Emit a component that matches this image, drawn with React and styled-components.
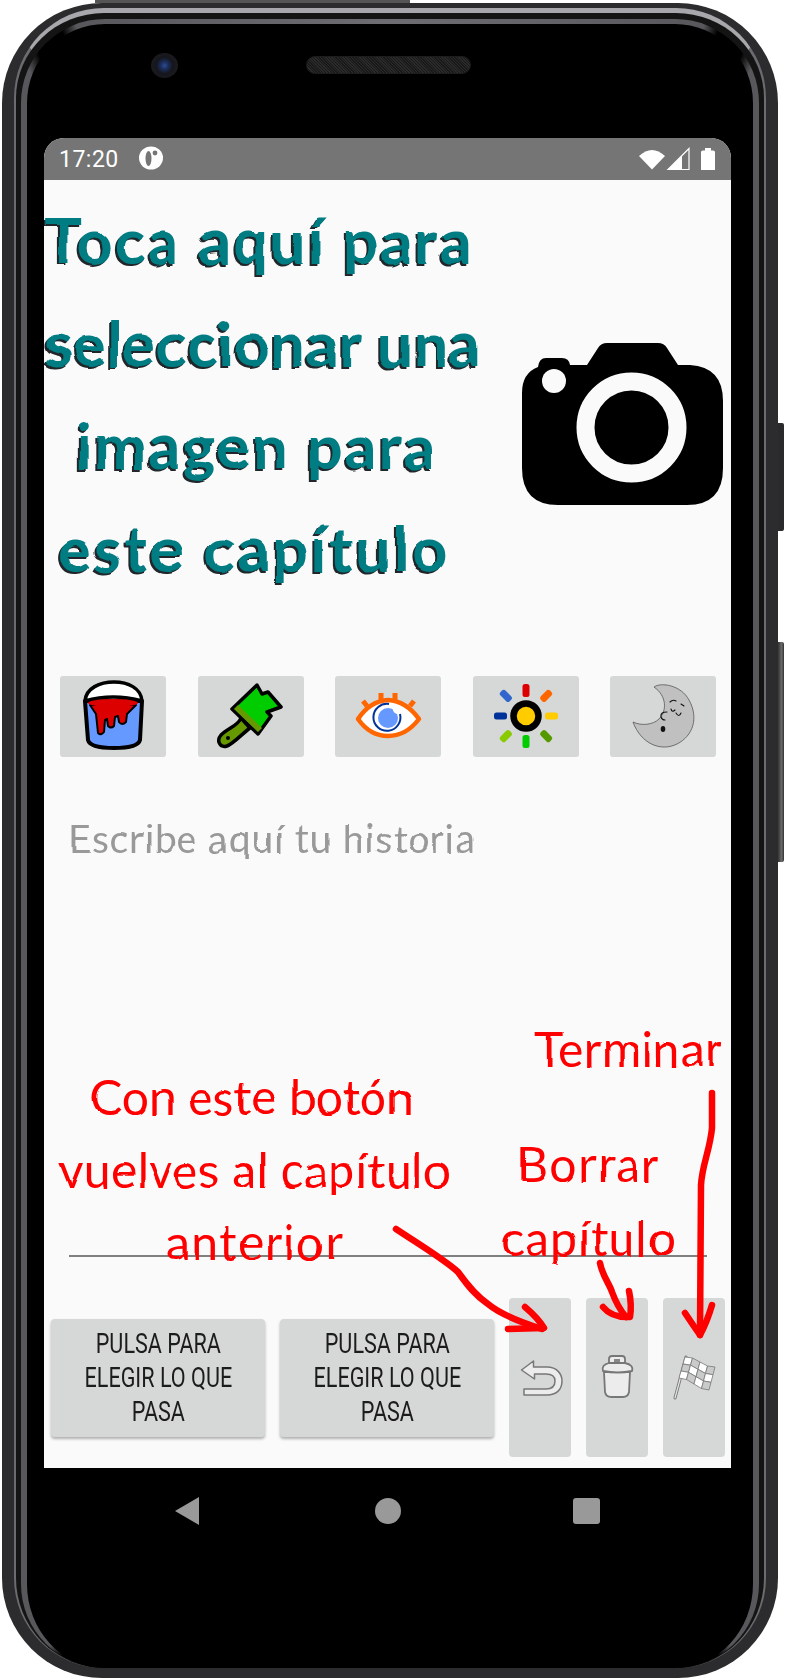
import styled, { createGlobalStyle } from 'styled-components';

const GREY_BTN = '#d6d7d7';

const Global = createGlobalStyle`
  html, body { margin: 0; padding: 0; background: #fff; }
  body { font-family: "Lato", "Noto Sans", sans-serif; }
`;

function App() {
  return (
    <Page>
      <Global />
      <HandFilter />
      <TopEdge />
      <VolumeKey />
      <PowerKey />
      <Phone>
        <Rim>
          <Bezel>
            <Earpiece>
              <FrontCamera />
              <Speaker />
            </Earpiece>
            <Screen>
              <StatusBar>
                <Clock>17:20</Clock>
                <NotifIcon />
                <StatusIcons />
              </StatusBar>
              <Hero>
                <Heading>
                  <HeadingLine $spacing={2}>Toca aquí para</HeadingLine>
                  <HeadingLine $spacing={0.4}>seleccionar una</HeadingLine>
                  <HeadingLine $spacing={1.9} $after={5}>imagen para</HeadingLine>
                  <HeadingLine $spacing={2.6} $after={10}>este capítulo</HeadingLine>
                </Heading>
                <CameraIcon />
              </Hero>
              <Tools>
                <ToolButton><BucketIcon /></ToolButton>
                <ToolButton><BrushIcon /></ToolButton>
                <ToolButton><EyeIcon /></ToolButton>
                <ToolButton><SunIcon /></ToolButton>
                <ToolButton><MoonIcon /></ToolButton>
              </Tools>
              <Story>
                <Placeholder>Escribe aquí tu historia</Placeholder>
              </Story>
              <Actions>
                <ChoiceButton><ChoiceLabel>Pulsa para<br />elegir lo que<br />pasa</ChoiceLabel></ChoiceButton>
                <ChoiceButton><ChoiceLabel>Pulsa para<br />elegir lo que<br />pasa</ChoiceLabel></ChoiceButton>
                <IconButton><UndoIcon /></IconButton>
                <IconButton><TrashIcon /></IconButton>
                <IconButton><FlagIcon /></IconButton>
              </Actions>

              <Note $x={485} $y={881} $w={200} $spacing={0.45}>Terminar</Note>
              <Note $x={43} $y={929} $w={330} $spacing={0}>Con este botón</Note>
              <Note $x={6} $y={1002} $w={410} $spacing={0.35}>vuelves al capítulo</Note>
              <Note $x={122} $y={1074} $w={170} $spacing={1.5}>anterior</Note>
              <Note $x={470} $y={996} $w={150} $spacing={1.7}>Borrar</Note>
              <Note $x={455} $y={1070} $w={180} $spacing={1}>capítulo</Note>
              <Arrows />
            </Screen>
            <Nav>
              <BackKey />
              <HomeKey />
              <RecentKey />
            </Nav>
          </Bezel>
        </Rim>
      </Phone>
    </Page>
  );
}

export default App;

function HandFilter() {
  return (
    <FilterDefs width="0" height="0" aria-hidden="true">
      <filter id="hand" x="-5%" y="-5%" width="110%" height="110%">
        <feTurbulence type="fractalNoise" baseFrequency="0.025" numOctaves="2" seed="4" />
        <feDisplacementMap in="SourceGraphic" scale="5" xChannelSelector="R" yChannelSelector="G" />
        <feGaussianBlur stdDeviation="0.35" />
      </filter>
    </FilterDefs>
  );
}

function NotifIcon() {
  return (
    <NotifSvg viewBox="0 0 24 24" width="24" height="24">
      <ellipse cx="12" cy="12" rx="12" ry="11.5" fill="#fff" />
      <ellipse cx="9.5" cy="12.5" rx="3" ry="7.5" fill="#757575" />
      <circle cx="16" cy="7" r="2.4" fill="#757575" />
    </NotifSvg>
  );
}

function StatusIcons() {
  return (
    <StatusSvg viewBox="640 147 78 24" width="78" height="24">
      <path d="M640 156 Q653 144 666 156 L653 169.500 Z" fill="#fff" />
      <path d="M669 169.500 L690 148.500 V169.500 Z" fill="none" stroke="#fff" strokeWidth="1.2" />
      <path d="M669 169.500 L683 155.500 V169.500 Z" fill="#fff" />
      <path d="M702 152 Q702 150.500 704 150.500 H706 V148 H712 V150.500 H714 Q716 150.500 716 152 V170 H702 Z" fill="#fff" />
    </StatusSvg>
  );
}

function CameraIcon() {
  return (
    <CameraSvg viewBox="0 0 201 162" width="201" height="162">
      <path d="M16 24 Q17 15 24 15 H40 Q47 15 48 22 H65 L76 5 Q79 0 85 0 H136 Q142 0 145 5 L156 22 H168 Q201 24 201 58 V125 Q201 162 165 162 H36 Q0 162 0 125 V50 Q0 30 16 24 Z" fill="#000" />
      <circle cx="32" cy="38" r="12" fill="#fafafa" />
      <circle cx="109.500" cy="84.500" r="46" fill="#000" stroke="#fafafa" strokeWidth="18" />
    </CameraSvg>
  );
}

function BucketIcon() {
  return (
    <ToolSvg viewBox="0 0 106 81">
      <path d="M25 25 L28 64 Q30 72 54 72 Q78 72 80 64 L82 25 Z" fill="#6699ff" stroke="#000" strokeWidth="4" strokeLinejoin="round" />
      <path d="M25 25 C26 12 40 6 54 6 C68 6 81 12 82 25 Q53 17 25 25 Z" fill="#fff" stroke="#000" strokeWidth="3.500" strokeLinejoin="round" />
      <path d="M30 29 H76 L67 38 L66 46 Q62 50 59 46 L58 40 L55 41 L54 50 Q51 53 48 50 L47 43 L45 44 L44 56 Q41 60 38 57 L36 38 Z" fill="#dd0000" stroke="#000" strokeWidth="2" strokeLinejoin="round" />
      <ellipse cx="53" cy="27" rx="25" ry="4" fill="#dd0000" />
    </ToolSvg>
  );
}

function BrushIcon() {
  return (
    <ToolSvg viewBox="0 0 106 81">
      <path d="M43 42 C40 50 30 52 23 59 C18 65 22 72 29 70 C35 68 44 58 52 52 Z" fill="#669900" stroke="#000" strokeWidth="3.500" strokeLinejoin="round" />
      <circle cx="30" cy="62" r="2" fill="#000" />
      <path d="M34 33 L59 9 L64 18 L70 16 L83 31 L69 36 L73 40 L60 58 Z" fill="#00cc00" stroke="#000" strokeWidth="3.500" strokeLinejoin="round" />
      <path d="M36 33 L40 29 L64 52 L60 56 Z" fill="#669900" />
    </ToolSvg>
  );
}

function EyeIcon() {
  return (
    <ToolSvg viewBox="0 0 106 81">
      <g stroke="#ff6600" strokeWidth="5">
        <path d="M46 25 V17 M60 25 V17 M32 30 L28 25 M75 30 L79 25" />
      </g>
      <path d="M23 43 Q35 25 53 24 Q71 25 84 43 Q71 60 53 60 Q35 60 23 43 Z" fill="#fff" stroke="#ff6600" strokeWidth="4.500" strokeLinejoin="round" />
      <circle cx="53" cy="42" r="10" fill="#6699ff" />
      <path d="M54 28 A13.500 13.500 0 1 0 65 38" fill="none" stroke="#003399" strokeWidth="2" />
      <path d="M58 30 A6 6 0 0 0 62 38 L65 33 Z" fill="#fff" />
    </ToolSvg>
  );
}

const RAYS = [
  ['#dd0000', 0], ['#ff6600', 45], ['#ffcc00', 90], ['#559900', 135],
  ['#00cc00', 180], ['#88cc00', 225], ['#003399', 270], ['#3366cc', 315],
];

function SunIcon() {
  return (
    <ToolSvg viewBox="0 0 106 81">
      {RAYS.map(([color, angle]) => (
        <rect key={angle} x="49.500" y={angle % 90 ? 5 : 8} width="7" height="13" rx="2.500" fill={color} transform={`rotate(${angle} 53 40)`} />
      ))}
      <circle cx="53" cy="40" r="12.500" fill="#ffcc00" stroke="#000" strokeWidth="6.500" />
    </ToolSvg>
  );
}

function MoonIcon() {
  return (
    <ToolSvg viewBox="-1 0 106 81">
      <path d="M43 11 C50 6 70 9 78 24 C88 42 82 60 66 68 C50 76 30 68 22 46 C30 50 42 49 48 43 C56 35 56 20 43 11 Z" fill="#c0c0c0" stroke="#555" strokeWidth=".8" />
      <g fill="none" stroke="#111" strokeWidth="1.100" strokeLinecap="round">
        <path d="M59 26 Q62 23 65 25 M70 28 L73 30" />
        <path d="M60 33 Q61 37 64 34 M65 37 Q68 42 70 37" />
        <path d="M56 36 Q49 36 50 41 Q51 44 54 44" />
      </g>
      <ellipse cx="52" cy="53" rx="2.300" ry="3" fill="#111" />
    </ToolSvg>
  );
}

function UndoIcon() {
  return (
    <GlyphSvg viewBox="0 0 62 80">
      <path d="M12.500 30 L24.500 21 V27 H38 C48 27 53 34 53 41 C53 50 47 55 38 55 H15 V49 H37 C43 49 46 46 46 41 C46 36 43 34 37 34 H25.500 V39 Z" fill="#ececec" stroke="#777" strokeWidth="1.500" strokeLinejoin="round" />
    </GlyphSvg>
  );
}

function TrashIcon() {
  return (
    <GlyphSvg viewBox="3 0 62 80">
      <path d="M21 32 H47 L46 52 Q45 57 40 57 H28 Q23 57 22 52 Z" fill="#ececec" stroke="#777" strokeWidth="1.800" />
      <path d="M26 23 V19 Q26 16 29 16 H39 Q42 16 42 19 V23" fill="#ececec" stroke="#777" strokeWidth="1.800" />
      <rect x="31" y="19" width="6" height="3" fill="#888" />
      <path d="M20 31 Q18 25 26 23 H42 Q51 25 49 31 Q35 34 20 31 Z" fill="#ececec" stroke="#777" strokeWidth="1.800" />
    </GlyphSvg>
  );
}

// flag cells interpolated between the four corners of the banner
const corner = { tl: [26, 17], tr: [56, 27], br: [50, 50], bl: [20, 38] };
function flagPoint(u, v) {
  const wave = Math.sin(u * Math.PI * 2) * -1.5;
  const x = (1 - v) * ((1 - u) * corner.tl[0] + u * corner.tr[0]) + v * ((1 - u) * corner.bl[0] + u * corner.br[0]);
  const y = (1 - v) * ((1 - u) * corner.tl[1] + u * corner.tr[1]) + v * ((1 - u) * corner.bl[1] + u * corner.br[1]);
  return `${x.toFixed(1)},${(y + wave).toFixed(1)}`;
}
const FLAG_CELLS = [];
for (let row = 0; row < 3; row++) {
  for (let col = 0; col < 4; col++) {
    FLAG_CELLS.push({
      key: `${row}-${col}`,
      white: (row + col) % 2 === 0,
      points: [flagPoint(col / 4, row / 3), flagPoint((col + 1) / 4, row / 3), flagPoint((col + 1) / 4, (row + 1) / 3), flagPoint(col / 4, (row + 1) / 3)].join(' '),
    });
  }
}

function FlagIcon() {
  return (
    <GlyphSvg viewBox="4 0 62 80">
      <path d="M27 17 L16 58" stroke="#777" strokeWidth="3" strokeLinecap="round" />
      <path d="M27 17 L16 58" stroke="#e6e6e6" strokeWidth="1.200" strokeLinecap="round" />
      {FLAG_CELLS.map(cell => (
        <polygon key={cell.key} points={cell.points} fill={cell.white ? '#fff' : '#c9caca'} stroke="#777" strokeWidth=".8" />
      ))}
    </GlyphSvg>
  );
}

function Arrows() {
  return (
    <ArrowLayer viewBox="44 138 687 1330">
      <g fill="none" stroke="#ff0000" strokeWidth="6.500" strokeLinecap="round" strokeLinejoin="round">
        <path d="M396 1229 C420 1245 445 1260 458 1272 C468 1286 476 1296 488 1304 C500 1314 520 1322 542 1329" />
        <path d="M525 1307 Q538 1318 544 1328 L508 1329" />
        <path d="M600 1263 C602 1275 610 1285 612 1292 C616 1303 620 1310 626 1317" />
        <path d="M629 1291 Q632 1305 630 1317 Q612 1318 603 1307" />
        <path d="M712 1093 L712 1128 C710 1150 702 1165 701 1185 L700 1335" />
        <path d="M712 1305 Q707 1322 700 1335 Q693 1325 685 1313" />
      </g>
    </ArrowLayer>
  );
}

const Page = styled.div`
  position: relative;
  width: 786px;
  height: 1680px;
  padding: 3px 8px 0 2px;
  box-sizing: border-box;
  background: #fff;
  overflow: hidden;
`;

const FilterDefs = styled.svg`
  position: absolute;
`;

const TopEdge = styled.div`
  position: absolute;
  top: 0;
  left: 95px;
  width: 315px;
  height: 3px;
  background: #555;
`;

const VolumeKey = styled.div`
  position: absolute;
  top: 423px;
  left: 778px;
  width: 6px;
  height: 108px;
  border-radius: 0 2px 2px 0;
  background: #2a2a2c;
`;

const PowerKey = styled(VolumeKey)`
  top: 642px;
  height: 220px;
  background: linear-gradient(90deg, #333 0, #6a6a6c 60%, #333 100%);
`;

const Phone = styled.div`
  height: 1675px;
  padding: 5px 12px 10px;
  box-sizing: border-box;
  border-radius: 100px;
  background: #2c2c2e;
`;

const Rim = styled.div`
  height: 100%;
  padding: 6px 5px 0;
  box-sizing: border-box;
  border: 2px solid #6b6b70;
  border-top: 5px solid #a8a8ac;
  border-bottom: 0;
  border-radius: 90px;
  background: #141414;
`;

const Bezel = styled.div`
  height: 100%;
  display: flex;
  flex-direction: column;
  box-sizing: border-box;
  border: 6px solid transparent;
  border-top-width: 5px;
  border-bottom: 0;
  border-radius: 84px;
  background:
    linear-gradient(#000, #000) padding-box,
    conic-gradient(#6e6e72 0, #58585c 21deg, #000 22deg, #000 24deg, #58585c 25deg, #58585c 157deg, #000 158deg, #000 202deg,
      #58585c 203deg, #58585c 335deg, #000 336deg, #000 338deg, #58585c 339deg, #6e6e72 360deg) border-box;
`;

const Earpiece = styled.div`
  height: 114px;
  flex: none;
  display: flex;
  align-items: center;
  gap: 128px;
  padding: 0 0 32px 124px;
  box-sizing: border-box;
`;

const FrontCamera = styled.div`
  width: 27px;
  height: 25px;
  border-radius: 50%;
  background: radial-gradient(circle at 50% 50%, #2b4c92 0, #1b2c58 22%, #15161c 45%, #202022 100%);
`;

const Speaker = styled.div`
  width: 165px;
  height: 18px;
  border-radius: 9px;
  border: 1px solid #1c1c1c;
  box-sizing: border-box;
  background: repeating-linear-gradient(45deg, #2a2a2a 0 1px, #191919 1px 2px);
`;

const Screen = styled.div`
  position: relative;
  flex: none;
  width: 687px;
  height: 1330px;
  margin-left: 17px;
  display: flex;
  flex-direction: column;
  border-radius: 20px 20px 0 0;
  background: #fafafa;
  overflow: hidden;
`;

const StatusBar = styled.div`
  height: 42px;
  flex: none;
  display: flex;
  align-items: center;
  padding: 0 14px 0 15px;
  background: #757575;
`;

const Clock = styled.span`
  font: 400 23px "Roboto", sans-serif;
  color: #fff;
  letter-spacing: 0.5px;
`;

const NotifSvg = styled.svg`
  margin-left: 20px;
  margin-top: -2px;
`;

const StatusSvg = styled.svg`
  margin-left: auto;
`;

const Hero = styled.div`
  height: 496px;
  flex: none;
  display: flex;
  align-items: flex-start;
`;

const Heading = styled.h1`
  width: 430px;
  margin: 0;
  padding-top: 9px;
  flex: none;
  font: 700 63px/102.5px "Lato", sans-serif;
  color: #007b83;
  text-align: center;
  white-space: nowrap;
  text-shadow: -2px 2px 0 #20282a;
  filter: url(#hand);
`;

const HeadingLine = styled.span`
  display: block;
  letter-spacing: ${p => p.$spacing}px;
  padding-right: ${p => p.$after || 0}px;
`;

const CameraSvg = styled.svg`
  flex: none;
  margin: 163px 0 0 48px;
`;

const Tools = styled.div`
  display: flex;
  justify-content: space-between;
  flex: none;
  padding: 0 15px 0 16px;
`;

const ToolButton = styled.div`
  width: 106px;
  height: 81px;
  border-radius: 3px;
  background: ${GREY_BTN};
`;

const ToolSvg = styled.svg`
  display: block;
  width: 100%;
  height: 100%;
`;

const Story = styled.div`
  flex: 1;
  margin: 0 24px 0 25px;
  padding-top: 56px;
  border-bottom: 2px solid #808080;
`;

const Placeholder = styled.div`
  font: 400 39px/50px "Lato", sans-serif;
  color: #999;
  letter-spacing: 0.75px;
  filter: url(#hand);
`;

const Actions = styled.div`
  height: 211px;
  flex: none;
  display: flex;
  align-items: center;
  gap: 15px;
  padding: 30px 5px 0 7px;
  box-sizing: border-box;
`;

const ChoiceButton = styled.div`
  width: 214px;
  height: 118px;
  flex: none;
  display: flex;
  align-items: center;
  justify-content: center;
  border-radius: 4px;
  background: ${GREY_BTN};
  box-shadow: 0 2px 3px rgba(0, 0, 0, 0.3);
`;

const ChoiceLabel = styled.div`
  flex: none;
  transform: scaleX(0.8);
  text-align: center;
  white-space: nowrap;
  font: 400 27px/34px "Roboto", sans-serif;
  text-transform: uppercase;
  color: #1c1c1c;
`;

const IconButton = styled.div`
  width: 62px;
  height: 159px;
  flex: none;
  display: flex;
  align-items: center;
  border-radius: 4px;
  background: ${GREY_BTN};
`;

const GlyphSvg = styled.svg`
  display: block;
  width: 62px;
  height: 80px;
  margin-top: 5px;
`;

const Note = styled.div`
  position: absolute;
  left: ${p => p.$x}px;
  top: ${p => p.$y}px;
  width: ${p => p.$w}px;
  font: 400 48px/60px "Lato", sans-serif;
  letter-spacing: ${p => p.$spacing}px;
  color: #ff0000;
  white-space: nowrap;
  text-align: center;
  filter: url(#hand);
`;

const ArrowLayer = styled.svg`
  position: absolute;
  top: 0;
  left: 0;
  width: 687px;
  height: 1330px;
  pointer-events: none;
`;

const Nav = styled.div`
  flex: 1;
  display: flex;
  align-items: flex-start;
  justify-content: space-between;
  padding: 29px 153px 0 148px;
`;

const BackKey = styled.div`
  width: 24px;
  height: 28px;
  background: #999;
  clip-path: polygon(100% 0, 100% 100%, 0 50%);
`;

const HomeKey = styled.div`
  width: 26px;
  height: 26px;
  margin: 1px 0 0 4px;
  border-radius: 50%;
  background: #999;
`;

const RecentKey = styled.div`
  width: 27px;
  height: 26px;
  margin-top: 1px;
  border-radius: 3px;
  background: #999;
`;
